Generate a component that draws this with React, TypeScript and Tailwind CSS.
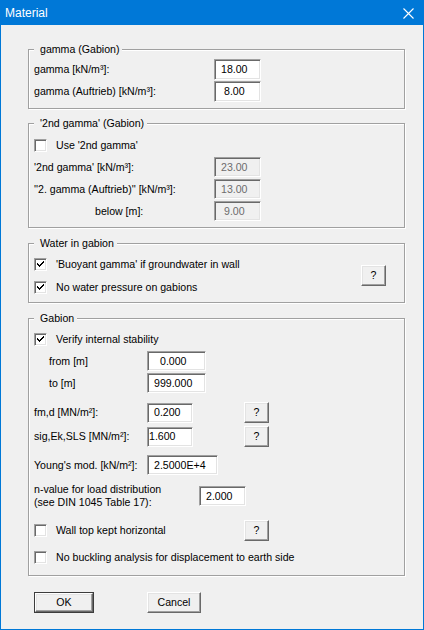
import React from "react";

const sunken =
    "border border-t-[#a0a0a0] border-l-[#a0a0a0] border-r-white border-b-white shadow-[inset_1px_1px_0_#696969,inset_-1px_-1px_0_#e3e3e3]";
const raised =
    "border border-t-white border-l-white border-r-[#696969] border-b-[#696969] shadow-[inset_-1px_-1px_0_#a0a0a0,inset_1px_1px_0_#e3e3e3] bg-[#f0f0f0]";

type FieldProps = {
    value: string;
    className: string;
    disabled?: boolean;
};

function Field({ value, className, disabled }: FieldProps) {
    return (
        <div
            className={`${sunken} ${className} flex items-center leading-[13px] ${disabled ? "bg-[#f0f0f0] text-[#6d6d6d]" : "bg-white text-black"}`}
        >
            {value}
        </div>
    );
}

function Check({ checked }: { checked?: boolean }) {
    return (
        <div className={`${sunken} w-[13px] h-[13px] bg-white shrink-0 flex items-center justify-center`}>
            {checked && (
                <svg width="9" height="9" viewBox="0 0 9 9" shapeRendering="crispEdges">
                    <path d="M1 3h1v1h1v1h1V4h1V3h1V2h1V1h1v2H7v1H6v1H5v1H4v1H3V6H2V5H1z" fill="#000" />
                </svg>
            )}
        </div>
    );
}

function HelpButton({ className }: { className: string }) {
    return (
        <div className={`${raised} w-[25px] h-[21px] flex items-center justify-center shrink-0 ${className}`}>?</div>
    );
}

type GroupProps = {
    title: string;
    className: string;
    children: React.ReactNode;
};

function Group({ title, className, children }: GroupProps) {
    return (
        <div className={`relative border border-[#a0a0a0] shadow-[inset_1px_1px_0_#fff,1px_1px_0_#fff] ${className}`}>
            <span className="absolute -top-[7px] left-[5px] bg-[#f0f0f0] pl-[6px] pr-[3px] leading-[13px]">{title}</span>
            {children}
        </div>
    );
}

export default function App() {
    return (
        <div className="w-[424px] h-[630px] border border-[#0078d7] bg-[#f0f0f0] flex flex-col font-['Liberation_Sans',Arial,sans-serif] text-[10.6px] leading-[13px] text-black overflow-hidden">
            <div className="h-[24px] bg-[#0078d7] flex items-center justify-between text-white text-[12px] pl-[4px] shrink-0">
                <span className="mt-[1px]">Material</span>
                <svg width="11" height="11" viewBox="0 0 11 11" className="mr-[9px] mt-[1px]">
                    <path d="M0.5 0.5L10.5 10.5M10.5 0.5L0.5 10.5" stroke="#fff" strokeWidth="1.1" />
                </svg>
            </div>

            <div className="pl-[27px] pt-[24px] flex flex-col">
                <Group title="gamma (Gabion)" className="w-[377px] h-[60px]">
                    <div className="flex flex-col pl-[5px] pt-[9px] gap-[1px]">
                        <div className="flex items-center h-[21px]">
                            <span className="w-[180px]">gamma [kN/m³]:</span>
                            <Field value="18.00" className="w-[47px] h-[21px] pl-[6px]" />
                        </div>
                        <div className="flex items-center h-[21px]">
                            <span className="w-[180px]">gamma (Auftrieb) [kN/m³]:</span>
                            <Field value="8.00" className="w-[47px] h-[21px] pl-[9px]" />
                        </div>
                    </div>
                </Group>

                <Group title="'2nd gamma' (Gabion)" className="w-[377px] h-[105px] mt-[14px]">
                    <div className="flex flex-col pl-[5px] pt-[15px]">
                        <div className="flex items-center">
                            <Check />
                            <span className="ml-[9px]">Use '2nd gamma'</span>
                        </div>
                        <div className="flex items-center h-[20px] mt-[5px]">
                            <span className="w-[180px]">'2nd gamma' [kN/m³]:</span>
                            <Field value="23.00" disabled className="w-[47px] h-[20px] pl-[6px]" />
                        </div>
                        <div className="flex items-center h-[20px] mt-[2px]">
                            <span className="w-[180px]">''2. gamma (Auftrieb)'' [kN/m³]:</span>
                            <Field value="13.00" disabled className="w-[47px] h-[20px] pl-[6px]" />
                        </div>
                        <div className="flex items-center h-[20px] mt-[2px]">
                            <span className="w-[180px] pl-[61px]">below [m]:</span>
                            <Field value="9.00" disabled className="w-[47px] h-[20px] pl-[9px]" />
                        </div>
                    </div>
                </Group>

                <Group title="Water in gabion" className="w-[377px] h-[60px] mt-[15px]">
                    <div className="flex pl-[5px]">
                        <div className="flex flex-col flex-1 pt-[14px] gap-[10px]">
                            <div className="flex items-center">
                                <Check checked />
                                <span className="ml-[9px]">'Buoyant gamma' if groundwater in wall</span>
                            </div>
                            <div className="flex items-center">
                                <Check checked />
                                <span className="ml-[9px]">No water pressure on gabions</span>
                            </div>
                        </div>
                        <HelpButton className="mt-[21px] mr-[18px]" />
                    </div>
                </Group>

                <Group title="Gabion" className="w-[377px] h-[258px] mt-[15px]">
                    <div className="flex flex-col pl-[5px] pt-[14px]">
                        <div className="flex items-center">
                            <Check checked />
                            <span className="ml-[9px]">Verify internal stability</span>
                        </div>
                        <div className="flex items-center h-[20px] mt-[5px]">
                            <span className="w-[113px] pl-[15px]">from [m]</span>
                            <Field value="0.000" className="w-[59px] h-[20px] pl-[12px]" />
                        </div>
                        <div className="flex items-center h-[20px] mt-[2px]">
                            <span className="w-[113px] pl-[15px]">to [m]</span>
                            <Field value="999.000" className="w-[59px] h-[20px] pl-[6px]" />
                        </div>
                        <div className="flex items-center h-[21px] mt-[9px]">
                            <span className="w-[113px]">fm,d [MN/m²]:</span>
                            <Field value="0.200" className="w-[46px] h-[20px] pl-[6px]" />
                            <HelpButton className="ml-[51px]" />
                        </div>
                        <div className="flex items-center h-[21px] mt-[3px]">
                            <span className="w-[113px]">sig,Ek,SLS [MN/m²]:</span>
                            <Field value="1.600" className="w-[46px] h-[20px] pl-[1px]" />
                            <HelpButton className="ml-[51px]" />
                        </div>
                        <div className="flex items-center h-[20px] mt-[8px]">
                            <span className="w-[113px]">Young's mod. [kN/m²]:</span>
                            <Field value="2.5000E+4" className="w-[71px] h-[20px] pl-[6px]" />
                        </div>
                        <div className="flex items-center mt-[8px]">
                            <span className="w-[165px]">
                                n-value for load distribution
                                <br />
                                (see DIN 1045 Table 17):
                            </span>
                            <Field value="2.000" className="w-[47px] h-[20px] pl-[6px]" />
                        </div>
                        <div className="flex items-center h-[21px] mt-[11px]">
                            <Check />
                            <span className="ml-[9px] w-[188px]">Wall top kept horizontal</span>
                            <HelpButton className="" />
                        </div>
                        <div className="flex items-center mt-[10px]">
                            <Check />
                            <span className="ml-[9px]">No buckling analysis for displacement to earth side</span>
                        </div>
                    </div>
                </Group>

                <div className="flex mt-[16px] ml-[6px]">
                    <div className="border border-[#3c3c3c]">
                        <div className={`${raised} w-[58px] h-[19px] flex items-center justify-center`}>OK</div>
                    </div>
                    <div className={`${raised} w-[54px] h-[21px] flex items-center justify-center ml-[53px]`}>Cancel</div>
                </div>
            </div>
        </div>
    );
}
